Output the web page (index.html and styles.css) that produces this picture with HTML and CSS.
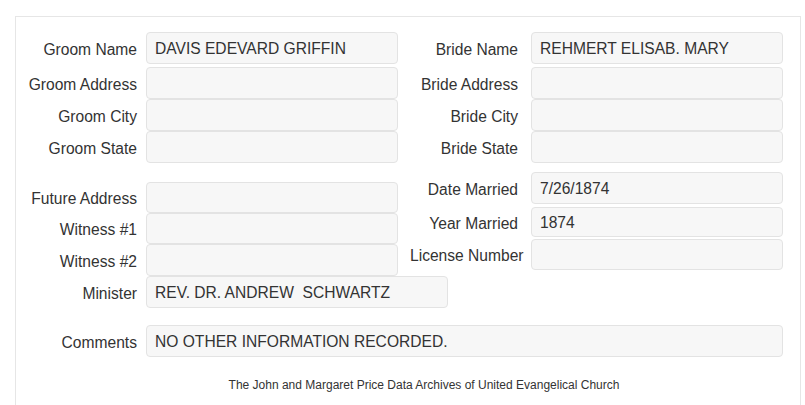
FILE: index.html
```html
<!DOCTYPE html>
<html lang="en">
<head>
<meta charset="UTF-8" />
<meta name="viewport" content="width=device-width, initial-scale=1" />
<title>Marriage Record</title>
<link rel="stylesheet" href="styles.css">
</head>
<body>
<div class="record">

  <div class="pair">
    <div class="col col-left">
      <div class="row spaced"><span class="lbl">Groom Name</span><div class="val">DAVIS EDEVARD GRIFFIN</div></div>
      <div class="row"><span class="lbl">Groom Address</span><div class="val"></div></div>
      <div class="row"><span class="lbl">Groom City</span><div class="val"></div></div>
      <div class="row"><span class="lbl">Groom State</span><div class="val"></div></div>
    </div>
    <div class="col col-right">
      <div class="row spaced"><span class="lbl">Bride Name</span><div class="val">REHMERT ELISAB. MARY</div></div>
      <div class="row"><span class="lbl">Bride Address</span><div class="val"></div></div>
      <div class="row"><span class="lbl">Bride City</span><div class="val"></div></div>
      <div class="row"><span class="lbl">Bride State</span><div class="val"></div></div>
    </div>
  </div>

  <div class="pair lower">
    <div class="col col-left">
      <div class="row h31"><span class="lbl">Future Address</span><div class="val"></div></div>
      <div class="row h31"><span class="lbl">Witness #1</span><div class="val"></div></div>
      <div class="row"><span class="lbl">Witness #2</span><div class="val"></div></div>
      <div class="row"><span class="lbl">Minister</span><div class="val wide">REV. DR. ANDREW&nbsp; SCHWARTZ</div></div>
    </div>
    <div class="col col-right">
      <div class="row spaced"><span class="lbl">Date Married</span><div class="val">7/26/1874</div></div>
      <div class="row h30 spaced-sm"><span class="lbl">Year Married</span><div class="val">1874</div></div>
      <div class="row h31"><span class="lbl">License Number</span><div class="val"></div></div>
    </div>
  </div>

  <div class="row comments"><span class="lbl">Comments</span><div class="val full">NO OTHER INFORMATION RECORDED.</div></div>

  <p class="credit">The John and Margaret Price Data Archives of United Evangelical Church</p>
</div>
</body>
</html>
```

FILE: styles.css
```css
body {
  margin: 0; background: #fff; color: #333;
  font-family: "Liberation Sans", Arial, sans-serif; font-size: 15.6px;
}
.record {
  width: 784px; height: 373px; margin: 16px 0 0 15px;
  border: 1px solid #e6e6e6; border-bottom: none;
  padding-top: 15px;
}
.pair {
  display: flex; align-items: flex-start;
}
.pair.lower .col-left { margin-top: 19px; }
.pair.lower .col-right { margin-top: 9px; }
.col-left { width: 382px; }
.col-right { margin-left: 12px; }
.row {
  display: flex; align-items: center; height: 32px;
}
.row.spaced { margin-bottom: 3px; }
.row.spaced-sm { margin-bottom: 2px; }
.row.h31 { height: 31px; }
.row.h30 { height: 30px; }
.lbl {
  flex: none; text-align: right; white-space: nowrap; color: #333;
  padding-top: 3px;
}
.col-left .lbl, .comments .lbl { width: 121px; padding-right: 9px; }
.col-right .lbl { width: 108px; padding-right: 13px; }
.val {
  flex: none; box-sizing: border-box; width: 252px; height: 100%;
  display: flex; align-items: center; padding: 2px 8px 0; white-space: nowrap;
  background: #f7f7f7; border: 1px solid #e3e3e3; border-radius: 4px;
  color: #333;
}
.val.wide { width: 302px; }
.val.full { width: 637px; }
.comments { margin-top: 17px; }
.credit {
  margin: 20px 0 0; padding-left: 32px; text-align: center;
  font-size: 12px; line-height: 16px; color: #333;
}
```
